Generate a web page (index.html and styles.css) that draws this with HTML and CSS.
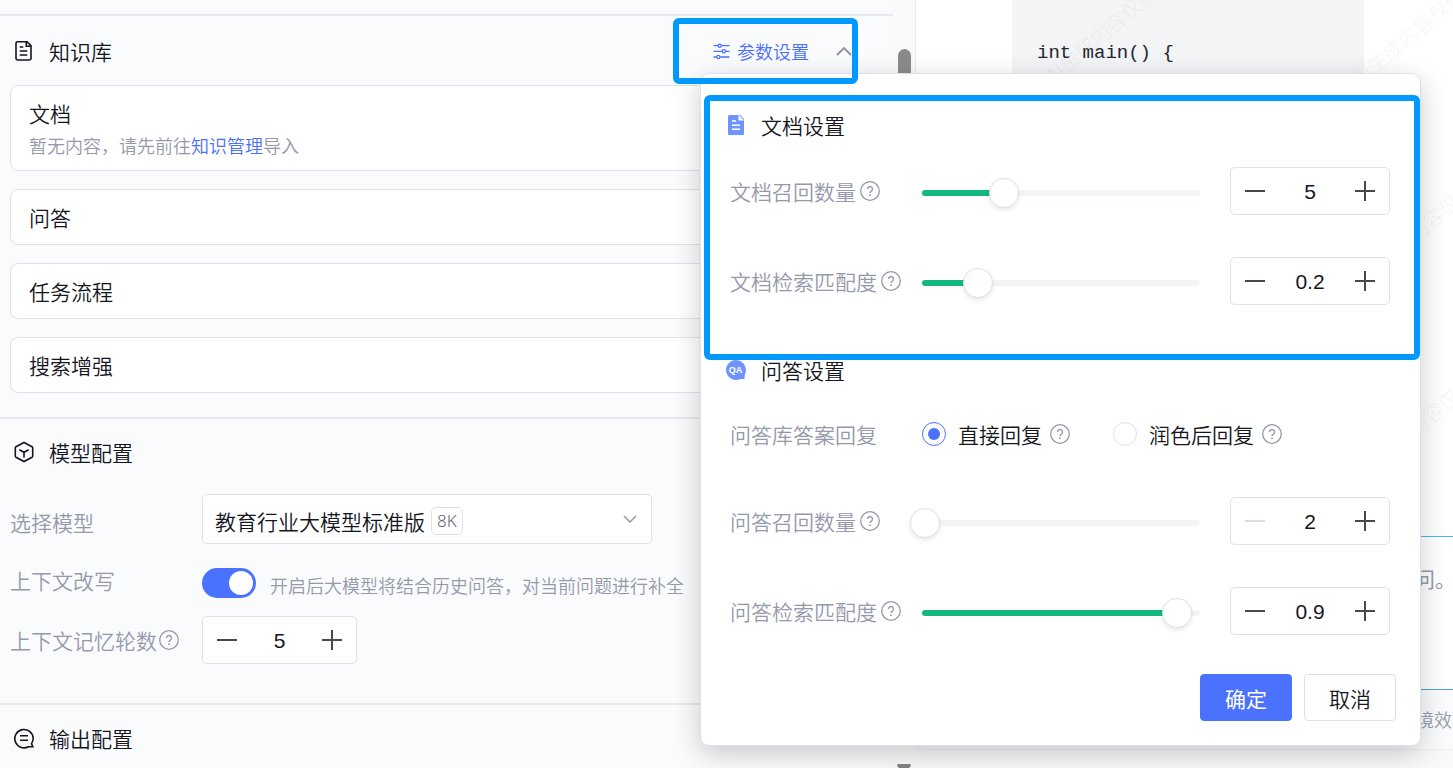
FILE: index.html
```html
<!DOCTYPE html>
<html lang="zh-CN">
<head>
<meta charset="utf-8">
<title>应用配置</title>
<link rel="stylesheet" href="styles.css">
</head>
<body>
<svg class="defs" aria-hidden="true">
  <symbol id="help" viewBox="0 0 20 20"><circle cx="10" cy="10" r="9.3" fill="none" stroke="currentColor" stroke-width="1.3"/><path d="M7.5 8.1a2.5 2.5 0 1 1 3.9 2c-.9.6-1.4 1-1.4 2" fill="none" stroke="currentColor" stroke-width="1.4"/><circle cx="10" cy="14.2" r=".9" fill="currentColor"/></symbol>
  <symbol id="minus" viewBox="0 0 20 20"><path d="M0 10h20" stroke="currentColor" stroke-width="2"/></symbol>
  <symbol id="plus" viewBox="0 0 20 20"><path d="M0 10h20M10 0v20" stroke="currentColor" stroke-width="2"/></symbol>
</svg>
<div class="app">
  <main class="config">
    <section class="section">
      <header class="section-head first">
        <svg class="head-icon" viewBox="0 0 20 22"><path d="M4 1.700h9l4 4v12.600a1.700 1.700 0 0 1-1.700 1.700H3.700A1.700 1.700 0 0 1 2 18.300V3.400A1.700 1.700 0 0 1 3.700 1.700zM12.300 2v4.300H17M5.700 7h3.600M5.700 11h7.600M5.700 15h7.600" fill="none" stroke="currentColor" stroke-width="1.600"/></svg>
        <h2>知识库</h2>
        <div class="params">
          <button class="params-btn" type="button" aria-expanded="true">
            <svg class="params-icon" viewBox="0 0 17 16" fill="none" stroke="currentColor" stroke-width="1.300"><path d="M.5 2.700h4.300M8.700 2.700h7.800M.5 8.300h8.400M12.800 8.300h3.700M.5 14h3M7.400 14h9.100"/><circle cx="6.700" cy="2.700" r="1.600"/><circle cx="10.800" cy="8.300" r="1.600"/><circle cx="5.400" cy="14" r="1.600"/></svg>
            <span>参数设置</span>
          </button>
          <button class="fold" type="button" aria-label="收起"><svg viewBox="0 0 16 10"><path d="M1 9l7-7 7 7" fill="none" stroke="currentColor" stroke-width="1.800"/></svg></button>

          <div class="popover" role="dialog" aria-label="参数设置">
            <div class="pop-head">
              <svg viewBox="0 0 20 20"><path d="M3.500 0H13l5 5v13.500a1.500 1.500 0 0 1-1.500 1.500h-13A1.500 1.500 0 0 1 2 18.500v-17A1.500 1.500 0 0 1 3.500 0z" fill="#7094ff"/><path d="M12.500 0v5.500H18z" fill="#fff"/><path d="M13.500 0L18 4.500" stroke="#9db5ff" stroke-width="1.200"/><path d="M6 6h4M6 10.200h8M6 14.300h8" stroke="#fff" stroke-width="1.500"/></svg>
              <h3>文档设置</h3>
            </div>
            <div class="row">
              <label for="doc-count">文档召回数量<svg class="help"><use href="#help"/></svg></label>
              <div class="slider"><span class="rail"><span class="fill" style="width:29%"></span></span><input type="range" min="0" max="100" value="29.5" step="0.1" aria-label="文档召回数量"></div>
              <div class="stepper"><button type="button" aria-label="减少"><svg><use href="#minus"/></svg></button><input id="doc-count" type="text" value="5"><button type="button" aria-label="增加"><svg><use href="#plus"/></svg></button></div>
            </div>
            <div class="row">
              <label for="doc-match">文档检索匹配度<svg class="help"><use href="#help"/></svg></label>
              <div class="slider"><span class="rail"><span class="fill" style="width:20%"></span></span><input type="range" min="0" max="100" value="20" step="0.1" aria-label="文档检索匹配度"></div>
              <div class="stepper"><button type="button" aria-label="减少"><svg><use href="#minus"/></svg></button><input id="doc-match" type="text" value="0.2"><button type="button" aria-label="增加"><svg><use href="#plus"/></svg></button></div>
            </div>
            <div class="pop-head second">
              <svg viewBox="0 0 20 20"><path d="M10 0a10 10 0 0 1 10 10c0 2.200-.7 4.100-1.400 5.500V19h-4.200A10 10 0 1 1 10 0z" fill="#7094ff"/><text x="9.600" y="13.300" class="qa">QA</text></svg>
              <h3>问答设置</h3>
            </div>
            <div class="row reply" role="radiogroup" aria-label="问答库答案回复">
              <span class="row-name">问答库答案回复</span>
              <div class="choices">
                <label class="choice"><input type="radio" name="reply" checked>直接回复<svg class="help"><use href="#help"/></svg></label>
                <label class="choice"><input type="radio" name="reply">润色后回复<svg class="help"><use href="#help"/></svg></label>
              </div>
            </div>
            <div class="row">
              <label for="qa-count">问答召回数量<svg class="help"><use href="#help"/></svg></label>
              <div class="slider"><span class="rail"></span><input type="range" min="0" max="100" value="1" step="0.1" aria-label="问答召回数量"></div>
              <div class="stepper"><button type="button" aria-label="减少" disabled><svg><use href="#minus"/></svg></button><input id="qa-count" type="text" value="2"><button type="button" aria-label="增加"><svg><use href="#plus"/></svg></button></div>
            </div>
            <div class="row">
              <label for="qa-match">问答检索匹配度<svg class="help"><use href="#help"/></svg></label>
              <div class="slider"><span class="rail"><span class="fill" style="width:91%"></span></span><input type="range" min="0" max="100" value="91.7" step="0.1" aria-label="问答检索匹配度"></div>
              <div class="stepper"><button type="button" aria-label="减少"><svg><use href="#minus"/></svg></button><input id="qa-match" type="text" value="0.9"><button type="button" aria-label="增加"><svg><use href="#plus"/></svg></button></div>
            </div>
            <div class="actions">
              <button class="btn primary" type="button">确定</button>
              <button class="btn" type="button">取消</button>
            </div>
            <div class="mark mark-docs"></div>
          </div>
          <div class="mark mark-trigger"></div>
        </div>
      </header>
      <div class="cards">
        <article class="card"><h3>文档</h3><p>暂无内容，请先前往<a href="#">知识管理</a>导入</p></article>
        <article class="card"><h3>问答</h3></article>
        <article class="card"><h3>任务流程</h3></article>
        <article class="card"><h3>搜索增强</h3></article>
      </div>
    </section>

    <section class="section">
      <header class="section-head">
        <svg class="head-icon" viewBox="0 0 20 22"><path d="M10 1.500l8 4.300c.5.300.7.600.7 1.200v8c0 .6-.2.900-.7 1.200l-8 4.300-8-4.300c-.5-.3-.7-.6-.7-1.200V7c0-.6.2-.9.7-1.200zM5.300 8.700l4.700 2.600 4.700-2.600M10 11.300V16.500" fill="none" stroke="currentColor" stroke-width="1.600"/></svg>
        <h2>模型配置</h2>
      </header>
      <div class="form">
        <label for="model" class="model-label">选择模型</label>
        <div class="select">
          <select id="model"><option>教育行业大模型标准版</option></select>
          <span class="tag">8K</span>
          <svg viewBox="0 0 14 8"><path d="M1 1l6 6 6-6" fill="none" stroke="currentColor" stroke-width="1.500"/></svg>
        </div>
        <label for="rewrite">上下文改写</label>
        <div class="switch-line"><input id="rewrite" class="switch" type="checkbox" role="switch" checked><span>开启后大模型将结合历史问答，对当前问题进行补全</span></div>
        <label for="rounds">上下文记忆轮数<svg class="help"><use href="#help"/></svg></label>
        <div class="stepper narrow"><button type="button" aria-label="减少"><svg><use href="#minus"/></svg></button><input id="rounds" type="text" value="5"><button type="button" aria-label="增加"><svg><use href="#plus"/></svg></button></div>
      </div>
    </section>

    <section class="section">
      <header class="section-head">
        <svg class="head-icon" viewBox="0 0 20 22"><path d="M18.800 19.800h-4.500A9.200 9.200 0 1 1 19.200 11c0 2.500-.7 4.200-1.700 5.600z" fill="none" stroke="currentColor" stroke-width="1.600"/><path d="M6 8.800h8M6 13.200h8" stroke="currentColor" stroke-width="1.600"/></svg>
        <h2>输出配置</h2>
      </header>
    </section>
  </main>

  <div class="scroll" aria-hidden="true">
    <span class="scroll-thumb"></span>
    <svg viewBox="0 0 14 10"><path d="M1.500 0h11c1.500 0 1.500 1.500.8 2.500L9 9H5L.7 2.500C0 1.500 0 0 1.500 0z" fill="#858585"/></svg>
  </div>

  <aside class="preview">
    <div class="chat">
      <pre class="code">int main() {</pre>
      <textarea class="ask" placeholder="问。" aria-label="提问"></textarea>
      <p class="note">环境效果</p>
      <span class="watermark w1">AI生成内容仅供参考</span>
      <span class="watermark w2">AI生成内容仅供参考</span>
      <span class="watermark w3">AI生成内容仅供参考</span>
      <span class="watermark w4">AI生成内容仅供参考</span>
    </div>
  </aside>
</div>
</body>
</html>
```

FILE: styles.css
```css
* { box-sizing: border-box; }
body {
  margin: 0;
  overflow: hidden;
  background: #fafbfd;
  color: #15161d;
  font-family: "Noto Sans CJK SC", sans-serif;
  font-size: 21px;
  font-weight: 350;
  line-height: 30px;
}
h2, h3, p, pre { margin: 0; font-size: inherit; font-weight: inherit; }
button, input, select, textarea { font: inherit; color: inherit; margin: 0; }
button { padding: 0; border: 0; background: none; cursor: pointer; }
.defs { display: none; }

.app { display: grid; grid-template-columns: 893fr 22px 538fr; height: 100vh; }

/* left column */
.config { padding-top: 14px; min-width: 0; }
.section { border-top: 2px solid #e7e9f0; }
.section-head {
  display: flex;
  align-items: center;
  gap: 15px;
  height: 65px;
  padding: 0 41px 0 14px;
}
.section-head.first { height: 69px; }
.head-icon { width: 20px; height: 22px; }
.cards { display: flex; flex-direction: column; gap: 18px; padding: 0 10px 24px; }
.card {
  padding: 12px 18px;
  border: 1px solid #dfe1e8;
  border-radius: 8px;
  background: #fff;
}
.card p { margin-bottom: -4px; color: #9599ab; font-size: 18px; line-height: 34px; }
.card a { color: #4a6fff; text-decoration: none; }

.params { position: relative; display: flex; align-items: center; gap: 27px; height: 100%; margin-left: auto; }
.params-btn { display: flex; align-items: center; gap: 7px; color: #4a6fff; font-size: 18px; }
.params-icon { width: 17px; height: 16px; }
.fold { display: flex; color: #8d919b; }
.fold svg { width: 16px; height: 10px; }

/* form */
.form {
  display: grid;
  grid-template-columns: 192px 1fr;
  align-items: center;
  row-gap: 15px;
  padding: 10px 10px 39px;
}
.form label, .row > label, .row-name { display: flex; align-items: center; gap: 2px; color: #9599ab; white-space: nowrap; }
.form .model-label { padding-top: 6px; }
.row > label { gap: 4px; }
.help { width: 20px; height: 20px; color: #9599ab; }
.select { display: grid; align-items: center; width: 450px; max-width: 100%; }
.select > * { grid-area: 1 / 1; }
.select select {
  appearance: none;
  width: 100%;
  height: 50px;
  padding: 4px 12px 0;
  border: 1px solid #dfe1e8;
  border-radius: 5px;
  background: #fff;
}
.tag {
  justify-self: start;
  margin: 4px 0 0 229px;
  padding: 0 5px;
  border: 1px solid #dfe1e8;
  border-radius: 5px;
  color: #5f6478;
  font-family: "Noto Sans", sans-serif;
  font-size: 17px;
  line-height: 26px;
}
.select svg { justify-self: end; width: 14px; height: 8px; margin-right: 15px; color: #9599ab; }
.switch-line { display: flex; align-items: center; gap: 14px; height: 42px; padding-top: 6px; color: #9599ab; font-size: 18px; white-space: nowrap; }
.switch-line span { padding-top: 4px; }
.switch { appearance: none; width: 54px; height: 30px; padding: 3px; border-radius: 15px; background: #4a72ff; }
.switch::before { content: ""; display: block; width: 24px; height: 24px; margin-left: 24px; border-radius: 50%; background: #fff; }

.stepper {
  display: grid;
  grid-template-columns: 48px 1fr 48px;
  height: 48px;
  border: 1px solid #dfe1e8;
  border-radius: 5px;
  background: #fff;
  color: #484850;
}
.stepper.narrow { width: 155px; }
.stepper button { display: grid; place-items: center; }
.stepper svg { width: 20px; height: 20px; }
.stepper button:disabled { color: #dcdfe6; }
.stepper input {
  min-width: 0;
  padding: 2px 0 0;
  border: 0;
  background: none;
  color: #15161d;
  font-family: "Liberation Sans", sans-serif;
  font-weight: 400;
  text-align: center;
}

/* parameter popover */
.popover {
  position: absolute;
  z-index: 2;
  top: 57px;
  left: -13px;
  width: 721px;
  padding: 31px 30px 24px 0;
  border: 1px solid #dfe0e5;
  border-radius: 9px;
  background: #fff;
  box-shadow: 0 8px 28px rgba(0, 0, 0, .2);
}
.pop-head { display: flex; align-items: center; gap: 15px; height: 40px; padding-left: 25px; margin-bottom: 22px; }
.pop-head.second { margin-top: 45px; margin-bottom: 20px; }
.pop-head svg { width: 20px; height: 20px; }
.qa { fill: #fff; font-family: "Liberation Sans", sans-serif; font-size: 9px; font-weight: 700; text-anchor: middle; }
.row {
  display: grid;
  grid-template-columns: 192px 1fr 160px;
  align-items: center;
  padding-left: 29px;
  margin-bottom: 42px;
}
.reply { grid-template-columns: 192px 1fr; height: 48px; margin-bottom: 39px; }
.choices { display: flex; gap: 43px; }
.choice { display: flex; align-items: center; gap: 8px; }
.choice input {
  appearance: none;
  display: grid;
  place-items: center;
  width: 24px;
  height: 24px;
  margin-right: 4px;
  border: 1px solid #dfe1e8;
  border-radius: 50%;
  background: #fff;
}
.choice input:checked { border-color: #4a72ff; }
.choice input:checked::before { content: ""; width: 12px; height: 12px; border-radius: 50%; background: #4a72ff; }

.slider { display: grid; align-items: center; margin-right: 30px; padding-top: 3px; }
.slider > * { grid-area: 1 / 1; }
.rail { height: 6px; border-radius: 3px; background: #f3f4f6; overflow: hidden; }
.fill { display: block; height: 100%; background: #12b880; }
.slider input { appearance: none; width: calc(100% + 30px); height: 30px; margin: 0 -15px; background: none; }
.slider input::-webkit-slider-thumb {
  appearance: none;
  width: 30px;
  height: 30px;
  border: 1px solid #e0e1e8;
  border-radius: 50%;
  background: #fff;
  box-shadow: 0 2px 5px rgba(0, 0, 0, .1);
}

.actions { display: flex; justify-content: flex-end; gap: 12px; margin: -3px -6px 0 0; }
.btn { width: 92px; height: 47px; border: 1px solid #dfe1e8; border-radius: 4px; background: #fff; }
.primary { border-color: #4a72ff; background: #4a72ff; color: #fff; font-weight: 400; }

/* highlight frames drawn over the controls */
.mark { position: absolute; border: 6px solid #0099ff; border-radius: 6px; pointer-events: none; }
.mark-trigger { z-index: 3; top: 2px; left: -40px; width: 185px; height: 66px; }
.mark-docs { top: 21px; left: 3px; right: 0; height: 265px; }

/* scrollbar between the columns */
.scroll { display: flex; flex-direction: column; align-items: center; background: #fafafa; padding-top: 49px; }
.scroll-thumb { width: 13px; height: 400px; border-radius: 7px; background: #8b8b8b; }
.scroll svg { flex: none; width: 14px; height: 10px; margin-top: auto; margin-bottom: -4px; }

/* right column */
.preview { min-width: 0; overflow: hidden; background: #f8f9fb; }
.chat {
  position: relative;
  display: flex;
  flex-direction: column;
  height: calc(100vh - 18px);
  border: 1px solid #ececef;
  border-width: 0 0 1px 1px;
  border-radius: 0 0 0 12px;
  background: #fff;
  overflow: hidden;
}
.code {
  flex: 1;
  margin: 0 89px 0 96px;
  padding: 38px 25px;
  background: linear-gradient(#f3f4f6, #f3f4f6) no-repeat 0 0 / 100% 300px;
  color: #24262d;
  font-family: "Liberation Mono", monospace;
  font-size: 19px;
  font-weight: 400;
}
.ask {
  height: 154px;
  padding: 26px 0 0 498px;
  border: 0;
  border-top: 1px solid #3fbcff;
  border-bottom: 1px solid #4d9fe6;
  outline: 0;
  resize: none;
  background: #fff;
  white-space: pre;
  overflow: hidden;
}
.ask::placeholder { color: #9599ab; font-weight: 400; }
.note { height: 59px; padding: 14px 0 0 482px; background: #fafbfd; color: #9599ab; font-size: 18px; white-space: nowrap; }
.watermark {
  position: absolute;
  color: rgba(0, 0, 0, .05);
  font-size: 20px;
  line-height: 24px;
  white-space: nowrap;
  transform: rotate(-40deg);
  transform-origin: 0 50%;
}
.w1 { left: 132px; top: 66px; }
.w2 { left: 440px; top: 68px; }
.w3 { left: 450px; top: 262px; }
.w4 { left: 450px; top: 457px; }
```
